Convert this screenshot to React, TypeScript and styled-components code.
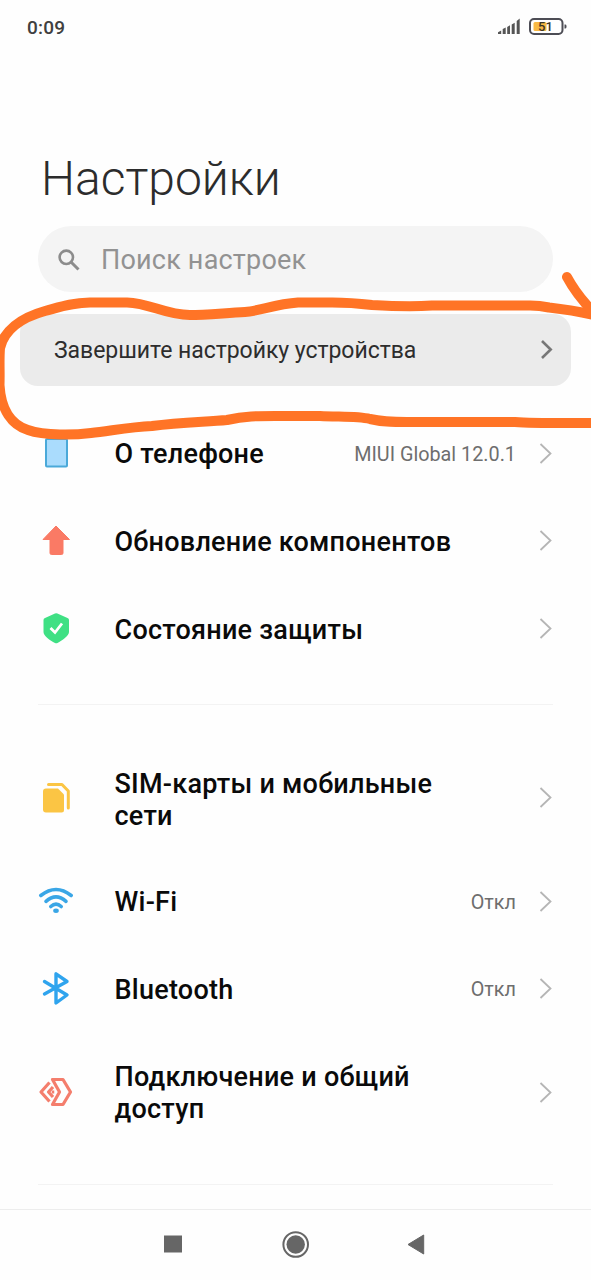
import React from "react";
import styled, { createGlobalStyle } from "styled-components";

const GlobalStyle = createGlobalStyle`
  * { box-sizing: border-box; }
  body { margin: 0; background: #fefefe; font-family: Roboto, "Noto Sans", sans-serif; }
`;

const Screen = styled.div`
  position: relative;
  display: flex;
  flex-direction: column;
  width: 591px;
  height: 1280px;
  overflow: hidden;
  background: #fefefe;
`;

const StatusBar = styled.header`
  display: flex;
  align-items: center;
  justify-content: space-between;
  height: 54px;
  padding: 0 24px 0 27px;
`;

const Clock = styled.time`
  font-size: 19px;
  font-weight: 500;
  letter-spacing: 0.2px;
  color: #404040;
`;

const StatusIcons = styled.svg`
  display: block;
  width: 69px;
  height: 22px;
`;

const Title = styled.h1`
  margin: 97px 0 0 41px;
  font-size: 48px;
  font-weight: 300;
  line-height: 56px;
  letter-spacing: 0;
  color: #2c2c2c;
`;

const SearchBar = styled.div`
  display: flex;
  align-items: center;
  gap: 20px;
  height: 66px;
  margin: 19px 38px 0;
  padding: 1px 19px 0;
  border-radius: 33px;
  background: #f4f4f4;
  color: #929292;
  font-size: 27px;
  letter-spacing: 0.2px;
`;

const Banner = styled.div`
  display: flex;
  align-items: center;
  justify-content: space-between;
  height: 72px;
  margin: 22px 20px 0;
  padding: 0 18px 0 34px;
  border-radius: 18px;
  background: #ebebeb;
  color: #2d2d2d;
  font-size: 23px;
  letter-spacing: -0.04px;
`;

const Group = styled.section<{ $top: number }>`
  display: flex;
  flex-direction: column;
  margin: 0 38px;
  padding: ${(p) => p.$top}px 0 31px;
  border-bottom: 1px solid #f3f3f3;
`;

const Row = styled.div<{ $tall?: boolean }>`
  display: flex;
  align-items: center;
  height: ${(p) => (p.$tall ? 119.5 : 87.5)}px;
`;

const RowIcon = styled.svg`
  flex: none;
  width: 36px;
  height: 36px;
  margin-right: 40.5px;
`;

const Label = styled.span<{ $drop?: number }>`
  flex: 1;
  padding-top: ${(p) => p.$drop ?? 1}px;
  font-size: 27px;
  font-weight: 500;
  line-height: 32px;
  letter-spacing: 0.25px;
  white-space: pre-line;
  color: #0a0a0a;
`;

const Value = styled.span`
  padding-top: 1px;
  margin-right: 22px;
  font-size: 19.8px;
  color: #6e6e6e;
`;

const ArrowSvg = styled.svg`
  flex: none;
  display: block;
  width: 15px;
  height: 24px;
`;

const NavBar = styled.nav`
  display: flex;
  align-items: center;
  justify-content: space-between;
  height: 71px;
  margin-top: auto;
  padding: 0 158px;
  border-top: 1px solid #ededed;
`;

const NavIcon = styled.svg`
  display: block;
  width: 30px;
  height: 30px;
`;

const Scribble = styled.svg`
  position: absolute;
  top: 260px;
  left: 0;
  width: 591px;
  height: 190px;
  pointer-events: none;
`;

const Arrow = ({ strong = false }: { strong?: boolean }) => (
  <ArrowSvg viewBox="0 0 15 24" fill="none" stroke={strong ? "#777" : "#b5b5b5"} strokeWidth={strong ? 2.6 : 1.8}>
    {strong ? <path d="M4 3 12.700 11.500 4 20" /> : <path d="M2.500 2 12.500 11.500 2.500 21" />}
  </ArrowSvg>
);

const PhoneIcon = () => (
  <RowIcon viewBox="0 0 36 36">
    <rect x="8" y="3" width="21" height="27.5" rx="1" fill="#aadcfd" stroke="#4aa9d9" strokeWidth="2" />
  </RowIcon>
);

const UpdateIcon = () => (
  <RowIcon viewBox="0 0 36 36">
    <path d="M18 3 31.500 16.500H25V30Q25 31.500 23.500 31.500H13.500Q12 31.500 12 30V16.500H5Z" fill="#fa7a65" stroke="#fa7a65" strokeLinejoin="round" />
  </RowIcon>
);

const ShieldIcon = () => (
  <RowIcon viewBox="0 0 36 36">
    <path d="M17 2.500Q18.200 1.800 19.400 2.500L29.500 7Q31 7.600 31 9.100V21C31 25 24 29.500 19.500 32Q18.200 32.700 17 32C12 29.500 5.500 25 5.500 21V9.100Q5.500 7.600 7 7Z" fill="#3fe084" />
    <path d="M12.500 17 17 21.500 24 12.500" fill="none" stroke="#fff" strokeWidth="2.800" />
  </RowIcon>
);

const SimIcon = () => (
  <RowIcon viewBox="0 0 36 36">
    <path d="M8 8.500H20L26 14.500V30Q26 32.500 23.500 32.500H8Q5 32.500 5 29.500V11.500Q5 8.500 8 8.500Z" fill="#fbc544" />
    <path d="M10.500 4.500H24L30.300 11V28" fill="none" stroke="#fbc544" strokeWidth="3" strokeLinecap="round" strokeLinejoin="round" />
  </RowIcon>
);

const WifiIcon = () => (
  <RowIcon viewBox="0 0 36 36" fill="none" stroke="#3aa6e6" strokeWidth="3.600" strokeLinecap="round">
    <path d="M2.800 11.500Q18 -.500 33.200 11.500" />
    <path d="M8 17.300Q18 8.500 28 17.300" />
    <path d="M12.800 22.500Q18 17.700 23.200 22.500" />
    <ellipse cx="18" cy="26.700" rx="2.800" ry="2.200" fill="#3aa6e6" stroke="none" />
  </RowIcon>
);

const BluetoothIcon = () => (
  <RowIcon viewBox="0 0 36 36" fill="none" stroke="#2fa4ee" strokeWidth="3.400" strokeLinejoin="round" strokeLinecap="round">
    <path d="M6.500 10.500 29 24 18 32V2.800L29 10.500 6.500 23" />
  </RowIcon>
);

const ShareIcon = () => (
  <RowIcon viewBox="0 0 36 36" fill="none" stroke="#f47e6d" strokeWidth="3.200" strokeLinejoin="round">
    <path d="M14.500 4.500H25L32.500 17 25 29.500H14.500L21.500 17Z" />
    <path d="M11.500 7.500 3 17 11.500 26.500M15 12 10.500 17 15 22" />
    <path d="M15 15.500V18.500" strokeWidth="2.500" />
  </RowIcon>
);

type Item = { label: string; icon: React.FC; value?: string; tall?: boolean; drop?: number };

const deviceItems: Item[] = [
  { label: "О телефоне", icon: PhoneIcon, value: "MIUI Global 12.0.1" },
  { label: "Обновление компонентов", icon: UpdateIcon, drop: 2 },
  { label: "Состояние защиты", icon: ShieldIcon, drop: 2 },
];

const networkItems: Item[] = [
  { label: "SIM-карты и мобильные\nсети", icon: SimIcon, tall: true, drop: 4 },
  { label: "Wi-Fi", icon: WifiIcon, value: "Откл" },
  { label: "Bluetooth", icon: BluetoothIcon, value: "Откл", drop: 2 },
  { label: "Подключение и общий\nдоступ", icon: ShareIcon, tall: true },
];

const SettingsGroup = ({ items, top }: { items: Item[]; top: number }) => (
  <Group $top={top}>
    {items.map(({ label, icon: Icon, value, tall, drop }) => (
      <Row key={label} $tall={tall}>
        <Icon />
        <Label $drop={drop}>{label}</Label>
        {value && <Value>{value}</Value>}
        <Arrow />
      </Row>
    ))}
  </Group>
);

export default function App() {
  return (
    <Screen>
      <GlobalStyle />
      <StatusBar>
        <Clock>0:09</Clock>
        <StatusIcons viewBox="0 0 69 22">
          <path d="M0 18.500V17L3.500 15V18.500ZM5 18.500V13.500L8 12V18.500ZM9.500 18.500V11.500L12.300 9.800V18.500ZM14 18.500V9L17 7.200V18.500ZM19 18.500V5.500L22 3V18.500Z" transform="translate(-.3 -.5)" fill="#555" />
          <rect x="32" y="3" width="32.500" height="15" rx="4" fill="#fff" stroke="#4d4d55" strokeWidth="2" />
          <rect x="35.500" y="6" width="13" height="9" rx="1.500" fill="#f9b944" />
          <path d="M66.500 8.500h1q1 0 1 2t-1 2h-1Z" fill="#4d4d55" />
          <text x="47.500" y="15.200" textAnchor="middle" fontFamily="Roboto, sans-serif" fontSize="13" fontWeight="500" fill="#3b3528">51</text>
        </StatusIcons>
      </StatusBar>
      <Title>Настройки</Title>
      <SearchBar>
        <svg width="24" height="24" viewBox="0 0 24 24" fill="none" stroke="#8c8c8c" strokeWidth="2.600">
          <circle cx="9.300" cy="9.300" r="6.700" />
          <path d="M14 14 21.500 21.500" strokeWidth="3" />
        </svg>
        <span>Поиск настроек</span>
      </SearchBar>
      <Banner>
        <span>Завершите настройку устройства</span>
        <Arrow strong />
      </Banner>
      <SettingsGroup items={deviceItems} top={24} />
      <SettingsGroup items={networkItems} top={34} />
      <NavBar>
        <NavIcon viewBox="0 0 30 30"><rect x="6" y="5.500" width="18" height="17" fill="#666" /></NavIcon>
        <NavIcon viewBox="0 0 30 30">
          <circle cx="14.700" cy="14.500" r="12.300" fill="none" stroke="#666" strokeWidth="2" />
          <circle cx="14.700" cy="14.500" r="9.200" fill="#666" />
        </NavIcon>
        <NavIcon viewBox="0 0 30 30"><path d="M5 14.500 20.700 5V24Z" fill="#666" stroke="#666" strokeLinejoin="round" /></NavIcon>
      </NavBar>
      <Scribble viewBox="0 260 591 190" fill="none" stroke="#ff7426" strokeWidth="10" strokeLinecap="round" strokeLinejoin="round">
        <path d="M598 316C582 312 562 309 549 307.500C542 306 536 305.500 530 305.500H432C410 307 390 306 372 305C355 303 345 302.500 332 302.500H298C275 304 260 311 245 312C225 313 205 315 190 315C165 315 150 303 127 302.500H90C70 303 60 307 45 311C20 318 4 331 0 348C-1 360 0 372 -.500 385C1 410 12 425 28 430C45 436 75 435 91 433C110 431 130 427 152 426C180 422 205 422 227 420C245 416 258 416 275 416H320C340 417 358 416 370 419C388 423 400 422 420 422H515C535 423.500 560 423 600 423" />
        <path d="M567 277Q576 294 594 313" />
      </Scribble>
    </Screen>
  );
}
